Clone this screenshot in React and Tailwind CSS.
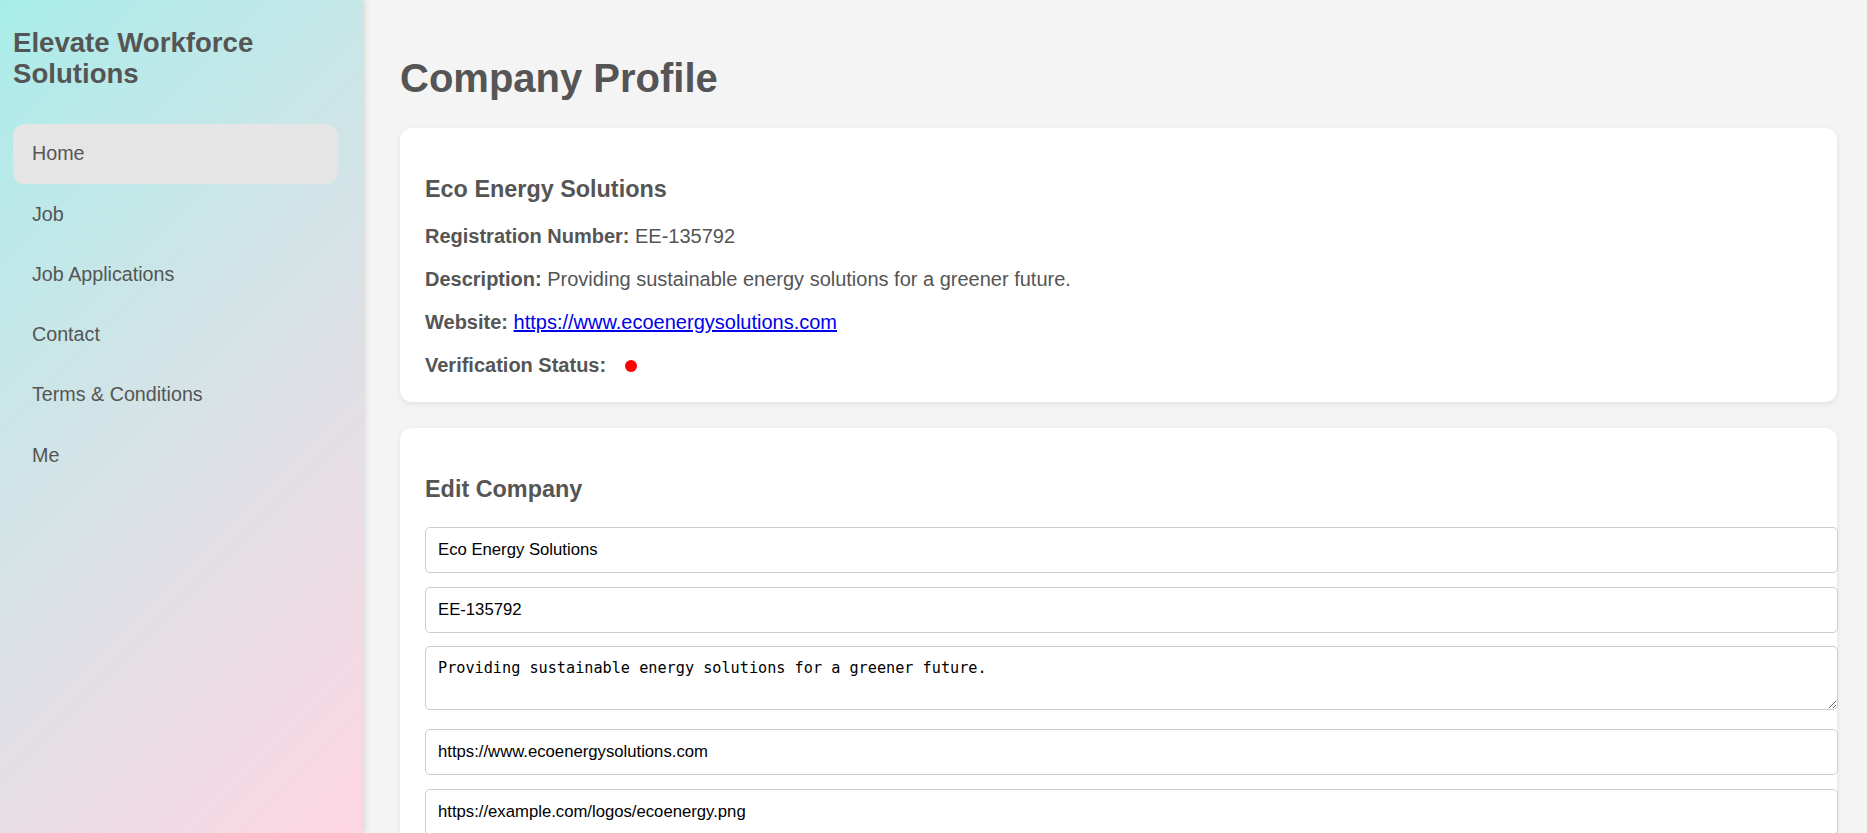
import React from "react";

const navItems = ["Home", "Job", "Job Applications", "Contact", "Terms & Conditions", "Me"];

export default function App() {
  return (
    <div
      className="flex h-screen w-full overflow-hidden bg-[#f4f4f4] text-[#555555]"
      style={{ fontFamily: '"Liberation Sans", Arial, sans-serif' }}
    >
      <aside className="relative z-10 h-screen w-[363px] shrink-0 bg-linear-135 from-[#a8edea] to-[#fed6e3] pl-[13px] pr-[25px] pt-[27px] shadow-[2px_0_6px_rgba(0,0,0,0.12)]">
        <h2 className="text-[27.6px] font-bold leading-[31.3px] text-[#555555]">
          Elevate Workforce Solutions
        </h2>
        <nav className="mt-[34px] flex flex-col">
          {navItems.map((item, i) => (
            <a
              key={item}
              href="#"
              className={
                "flex h-[60.3px] items-center rounded-[12px] pl-[19px] text-[19.7px] leading-[23px] text-[#555555] " +
                (i === 0 ? "bg-[#e5e5e5]" : "")
              }
            >
              {item}
            </a>
          ))}
        </nav>
      </aside>

      <main className="min-w-0 flex-1 overflow-hidden pl-[37px] pr-[30px] pt-[55px]">
        <h1 className="text-[40px] font-bold leading-[46px] text-[#555555]">Company Profile</h1>

        <section className="mt-[27px] rounded-[12px] bg-white px-[25px] pb-[25px] pt-[47.5px] shadow-[0_2px_6px_rgba(0,0,0,0.08)]">
          <h3 className="mb-[22.5px] text-[23.4px] font-bold leading-[27px]">Eco Energy Solutions</h3>
          <div className="flex flex-col gap-[20px] text-[20px] leading-[23px]">
            <p>
              <strong>Registration Number:</strong> EE-135792
            </p>
            <p>
              <strong>Description:</strong> Providing sustainable energy solutions for a greener future.
            </p>
            <p>
              <strong>Website:</strong>{" "}
              <a href="#" className="text-[#0000ee] underline">
                https://www.ecoenergysolutions.com
              </a>
            </p>
            <p>
              <strong>Verification Status:</strong>
              <span className="ml-[19px] inline-block h-[12px] w-[12px] rounded-full bg-[#ff0000]"></span>
            </p>
          </div>
        </section>

        <section className="mt-[25.6px] rounded-[12px] bg-white px-[25px] pb-[25px] pt-[48.5px] shadow-[0_2px_6px_rgba(0,0,0,0.08)]">
          <h3 className="mb-[23.7px] text-[23.4px] font-bold leading-[27px]">Edit Company</h3>
          <form className="flex flex-col">
            <input
              defaultValue="Eco Energy Solutions"
              className="mb-[14px] box-content block h-[20px] w-full rounded-[5px] border border-[#cccccc] bg-white px-[12px] py-[12px] text-[16.7px] leading-[20px] text-black outline-none"
            />
            <input
              defaultValue="EE-135792"
              className="mb-[13.4px] box-content block h-[20px] w-full rounded-[5px] border border-[#cccccc] bg-white px-[12px] py-[12px] text-[16.7px] leading-[20px] text-black outline-none"
            />
            <textarea
              defaultValue="Providing sustainable energy solutions for a greener future."
              className="mb-[19.8px] box-content block h-[37.5px] w-full resize-y rounded-[5px] border border-[#cccccc] bg-white px-[12px] py-[12px] text-[15.2px] leading-[18px] text-black outline-none"
              style={{ fontFamily: '"DejaVu Sans Mono", "Liberation Mono", monospace' }}
            />
            <input
              defaultValue="https://www.ecoenergysolutions.com"
              className="mb-[13.7px] box-content block h-[20px] w-full rounded-[5px] border border-[#cccccc] bg-white px-[12px] py-[12px] text-[16.7px] leading-[20px] text-black outline-none"
            />
            <input
              defaultValue="https://example.com/logos/ecoenergy.png"
              className="mb-[14px] box-content block h-[20px] w-full rounded-[5px] border border-[#cccccc] bg-white px-[12px] py-[12px] text-[16.7px] leading-[20px] text-black outline-none"
            />
            <button
              type="button"
              className="w-fit rounded-[5px] bg-[#555555] px-[20px] py-[12px] text-[16px] text-white"
            >
              Update Company
            </button>
          </form>
        </section>
      </main>
    </div>
  );
}
